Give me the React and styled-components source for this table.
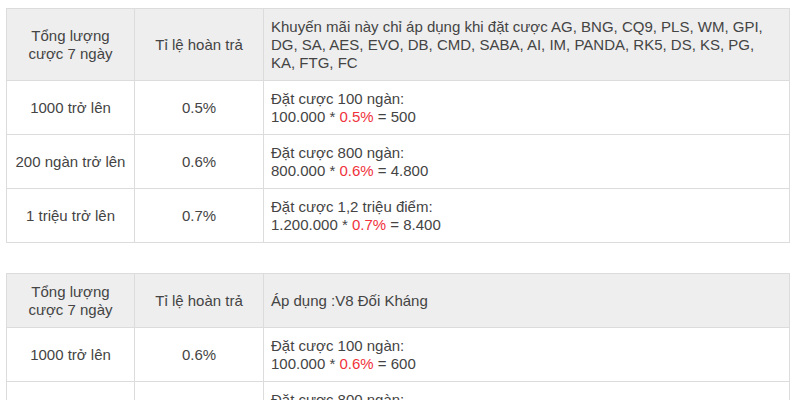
import React from "react";
import styled, { createGlobalStyle } from "styled-components";

const Global = createGlobalStyle`
  html, body { margin: 0; padding: 0; background: #fff; }
  body { font-family: "Liberation Sans", Arial, sans-serif; }
`;

const Page = styled.div`
  padding: 8px 11px 0 6px;
  display: flex;
  flex-direction: column;
  gap: 30px;
`;

const Table = styled.table`
  width: 784px;
  border-collapse: collapse;
  table-layout: fixed;
  font-size: 15px;
  line-height: 18px;
  color: #444;
`;

const Head = styled.th`
  background: #eeeeee;
  border: 1px solid #dcdcdc;
  padding: 9px 7px 8px;
  font-weight: normal;
  text-align: ${(p) => (p.$left ? "left" : "center")};
  vertical-align: middle;
`;

const Cell = styled.td`
  border: 1px solid #dcdcdc;
  padding: 9px 7px 8px;
  text-align: ${(p) => (p.$left ? "left" : "center")};
  vertical-align: middle;
`;

const Red = styled.span`
  color: #f0323c;
`;

const tables = [
  {
    title:
      "Khuyến mãi này chỉ áp dụng khi đặt cược AG, BNG, CQ9, PLS, WM, GPI, DG, SA, AES, EVO, DB, CMD, SABA, AI, IM, PANDA, RK5, DS, KS, PG, KA, FTG, FC",
    rows: [
      ["1000 trở lên", "0.5%", "Đặt cược 100 ngàn:", "100.000", "500"],
      ["200 ngàn trở lên", "0.6%", "Đặt cược 800 ngàn:", "800.000", "4.800"],
      ["1 triệu trở lên", "0.7%", "Đặt cược 1,2 triệu điểm:", "1.200.000", "8.400"],
    ],
  },
  {
    title: "Áp dụng :V8 Đối Kháng",
    rows: [
      ["1000 trở lên", "0.6%", "Đặt cược 100 ngàn:", "100.000", "600"],
      ["200 ngàn trở lên", "0.7%", "Đặt cược 800 ngàn:", "800.000", "5.600"],
      ["1 triệu trở lên", "0.8%", "Đặt cược 1,2 triệu điểm:", "1.200.000", "9.600"],
    ],
  },
];

export default function App() {
  return (
    <>
      <Global />
      <Page>
        {tables.map((t, i) => (
          <Table key={i}>
            <colgroup>
              <col style={{ width: 128 }} />
              <col style={{ width: 129 }} />
              <col />
            </colgroup>
            <thead>
              <tr>
                <Head>Tổng lượng<br />cược 7 ngày</Head>
                <Head>Tỉ lệ hoàn trả</Head>
                <Head $left>{t.title}</Head>
              </tr>
            </thead>
            <tbody>
              {t.rows.map((r, j) => (
                <tr key={j}>
                  <Cell>{r[0]}</Cell>
                  <Cell>{r[1]}</Cell>
                  <Cell $left>
                    {r[2]}
                    <br />
                    {r[3]} * <Red>{r[1]}</Red> = {r[4]}
                  </Cell>
                </tr>
              ))}
            </tbody>
          </Table>
        ))}
      </Page>
    </>
  );
}
